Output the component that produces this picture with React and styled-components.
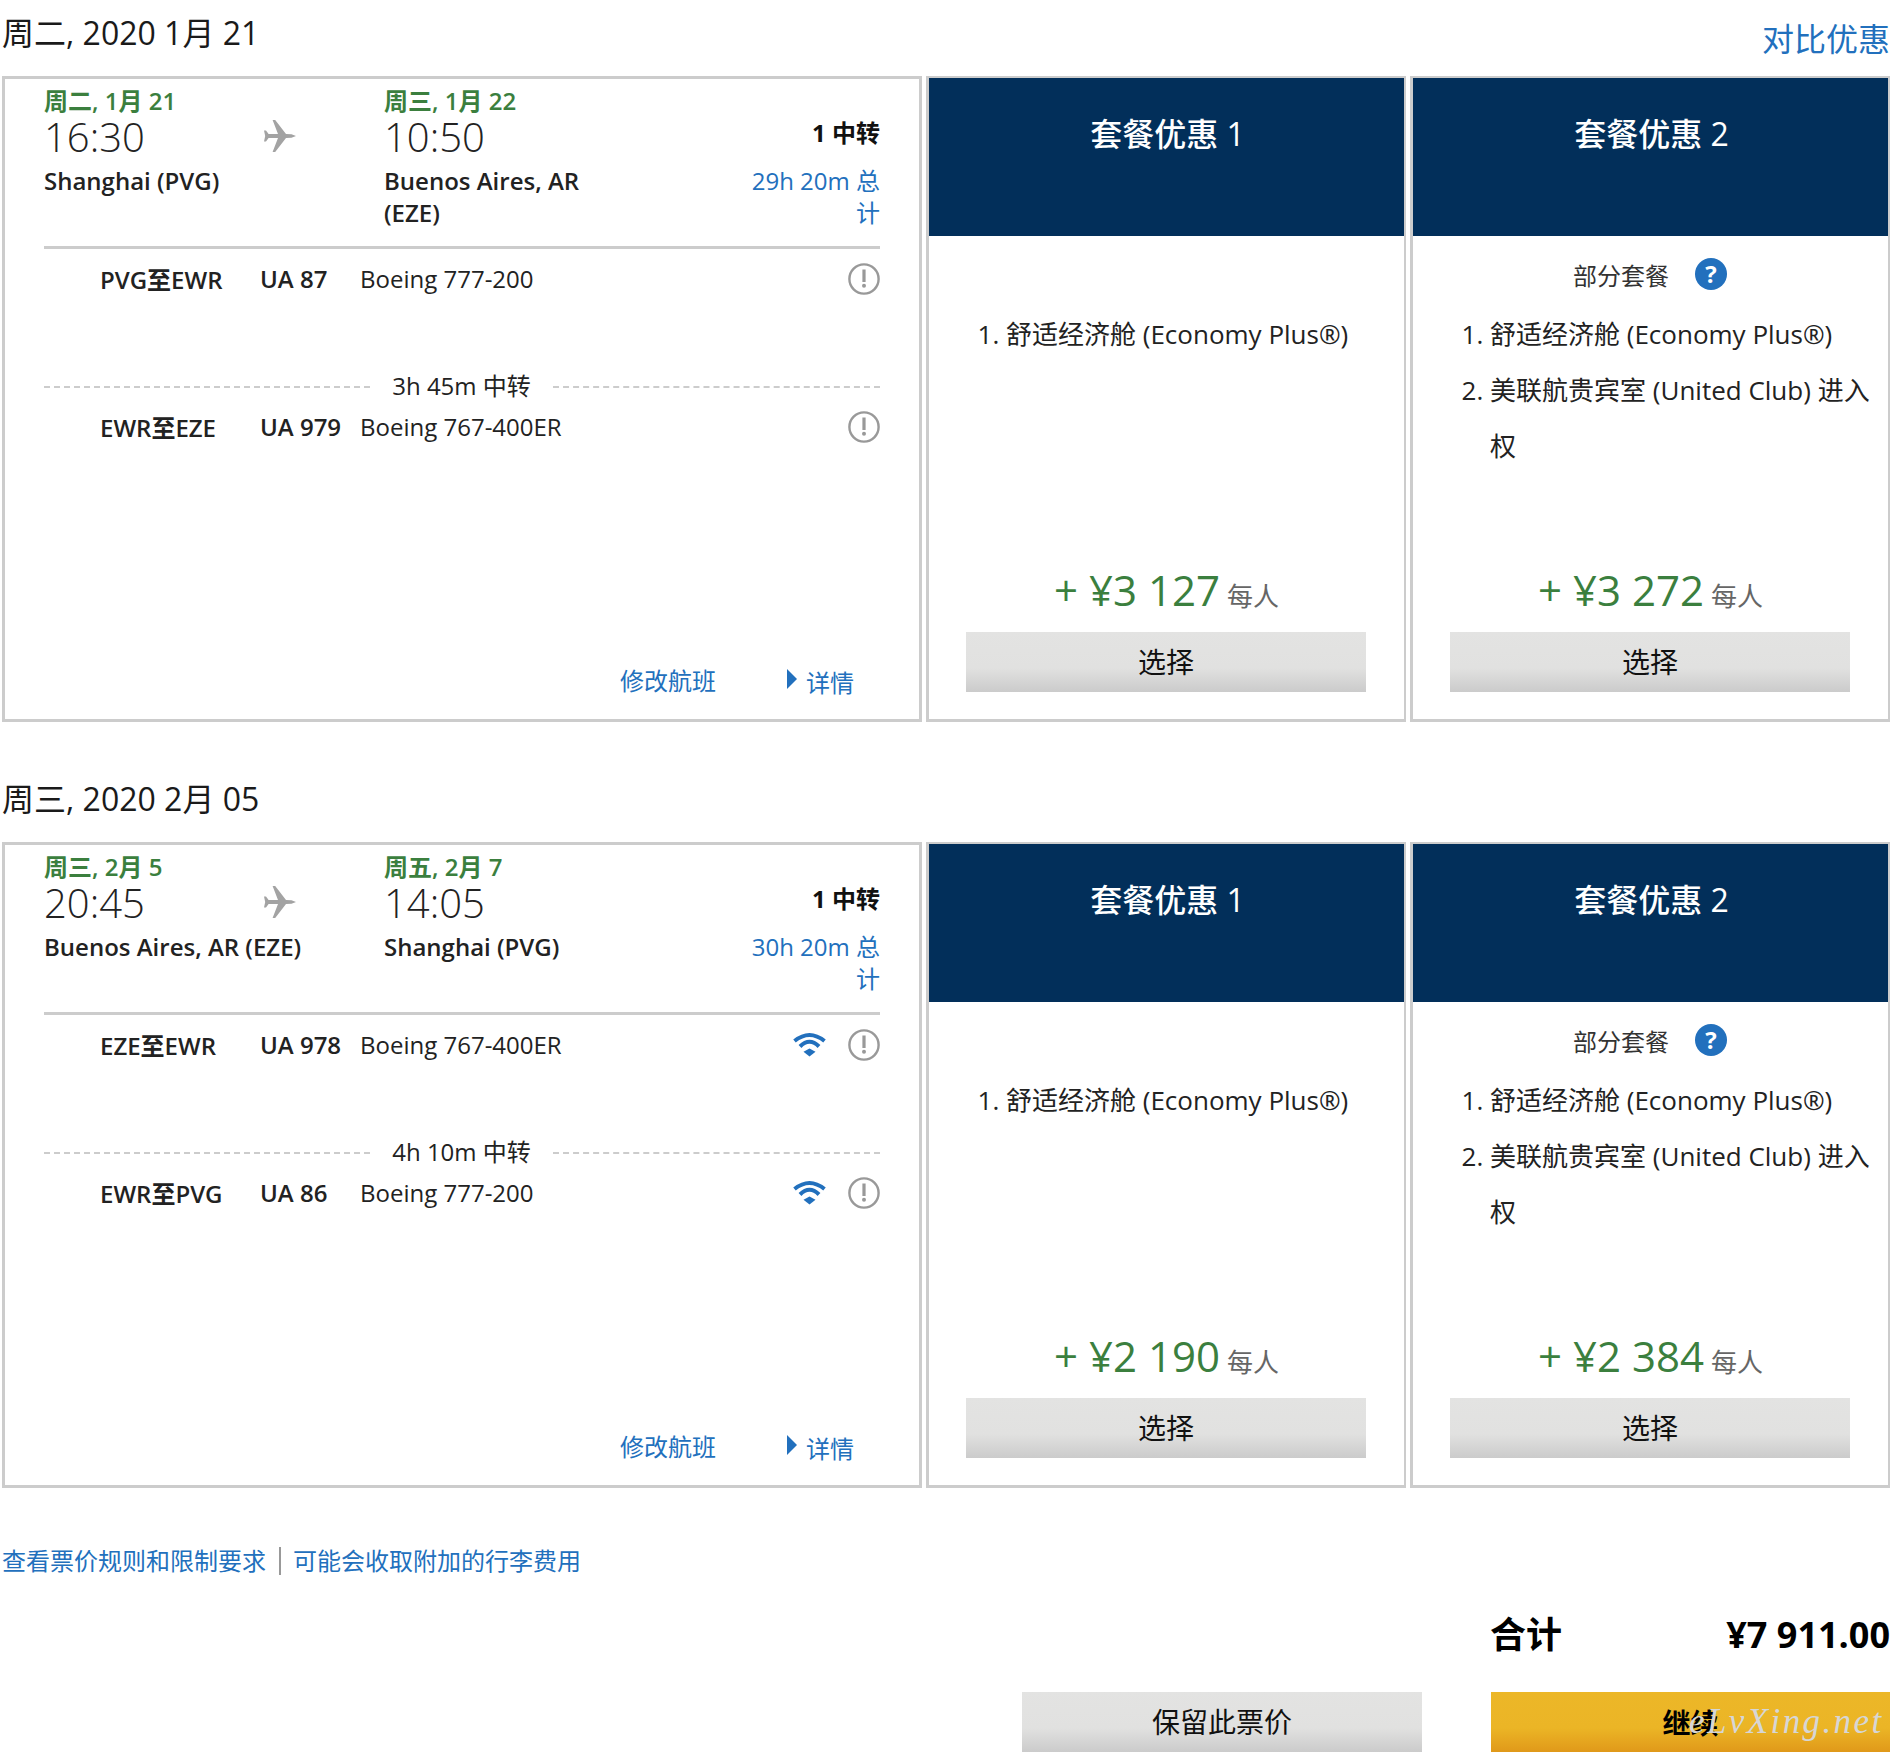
import React from 'react';
import styled, { createGlobalStyle } from 'styled-components';

const GlobalStyle = createGlobalStyle`
  html, body {
    margin: 0;
    padding: 0;
    background: #fff;
  }
  body {
    font-family: "Open Sans", "Noto Sans CJK SC", sans-serif;
    color: #1a1a1a;
  }
  * {
    box-sizing: border-box;
  }
`;

const BLUE = '#2270bd';
const GREEN = '#3b7f3e';

const Page = styled.div`
  width: 1894px;
  height: 1758px;
  padding: 0 4px 0 2px;
  overflow: hidden;
`;
const Section = styled.section`
  margin-bottom: 44px;
`;
const SectionHead = styled.div`
  height: 76px;
  display: flex;
  justify-content: space-between;
`;
const DayTitle = styled.h2`
  margin: 14px 0 0;
  font-size: 32px;
  line-height: 38px;
  font-weight: 400;
`;
const Compare = styled.a`
  margin-top: 18px;
  font-size: 32px;
  line-height: 42px;
  color: ${BLUE};
`;
const PanelRow = styled.div`
  display: grid;
  grid-template-columns: 920px 480px 480px;
  column-gap: 4px;
  height: 646px;
`;
const FlightPanel = styled.div`
  border: 3px solid #ccc;
  padding: 0 39px;
  display: flex;
  flex-direction: column;
`;
const Summary = styled.div`
  height: 170px;
  padding-top: 7px;
  border-bottom: 3px solid #ccc;
  display: grid;
  grid-template-columns: 340px 240px 1fr;
`;
const DateText = styled.div`
  font-size: 24px;
  line-height: 30px;
  font-weight: 600;
  margin-bottom: 1px;
  color: ${GREEN};
`;
const TimeLine = styled.div`
  display: flex;
  align-items: flex-start;
  height: 48px;
`;
const TimeText = styled.div`
  width: 220px;
  font-size: 40px;
  line-height: 40px;
  font-weight: 300;
  color: #222;
`;
const PlaneIcon = styled.svg`
  width: 32px;
  height: 32px;
  margin-top: 3px;
  fill: #a3a3a3;
`;
const City = styled.div`
  font-size: 24px;
  line-height: 32px;
  font-weight: 600;
  color: #222;
`;
const StopBlock = styled.div`
  text-align: right;
  padding-top: 30px;
  padding-left: 120px;
`;
const Stops = styled.div`
  font-size: 24px;
  line-height: 34px;
  font-weight: 700;
  color: #111;
  margin-bottom: 15px;
`;
const Duration = styled.div`
  font-size: 24px;
  line-height: 32px;
  color: ${BLUE};
`;
const FlightRow = styled.div`
  display: grid;
  grid-template-columns: 56px 160px 100px 1fr auto;
  align-items: center;
  height: 32px;
  margin-top: ${p => p.$top}px;
  font-size: 24px;
  color: #222;
`;
const Route = styled.div`
  grid-column: 2;
  font-weight: 600;
`;
const FlightNo = styled.div`
  font-weight: 600;
`;
const Aircraft = styled.div``;
const RowIcons = styled.div`
  display: flex;
  align-items: center;
  gap: 22px;
`;
const Layover = styled.div`
  display: grid;
  grid-template-columns: 326px 1fr 327px;
  align-items: center;
  height: 32px;
  margin-top: 78px;
  font-size: 24px;
  color: #222;
  text-align: center;
`;
const LayoverText = styled.span`
  margin-top: -5px;
`;
const DashLine = styled.div`
  border-top: 2px dashed #ccc;
`;
const PanelLinks = styled.div`
  margin-top: auto;
  margin-bottom: 20px;
  display: flex;
  align-items: center;
  padding-right: 26px;
  justify-content: flex-end;
  font-size: 24px;
  line-height: 32px;
  color: ${BLUE};
`;
const ChangeLink = styled.a`
  margin-right: 71px;
  margin-top: -4px;
`;
const DetailLink = styled.a`
  display: flex;
  align-items: flex-start;
  gap: 9px;
`;
const Caret = styled.span`
  width: 0;
  height: 0;
  margin-top: 2px;
  border-left: 10px solid ${BLUE};
  border-top: 10px solid transparent;
  border-bottom: 10px solid transparent;
`;
const OfferColumn = styled.div`
  border: solid #ccc;
  border-width: 2px 2px 3px 3px;
  display: flex;
  flex-direction: column;
`;
const OfferHead = styled.div`
  height: 158px;
  background: #022f5a;
  color: #fff;
  text-align: center;
  font-size: 32px;
  line-height: 40px;
  padding: 36px 0 0 2px;
  font-weight: 500;
`;
const OfferBody = styled.div`
  flex: 1;
  display: flex;
  flex-direction: column;
  padding: 22px 15px 27px 37px;
`;
const SubLabel = styled.div`
  height: 32px;
  display: flex;
  align-items: center;
  justify-content: center;
  gap: 26px;
  font-size: 24px;
  color: #333;
  padding-right: 23px;
`;
const HelpBadge = styled.span`
  width: 32px;
  height: 32px;
  border-radius: 50%;
  background: ${BLUE};
  color: #fff;
  font-size: 24px;
  font-weight: 700;
  line-height: 32px;
  text-align: center;
`;
const Perks = styled.ol`
  margin: 16px 0 0;
  padding: 0 0 0 40px;
  font-size: 26px;
  line-height: 56px;
  color: #222;
`;
const PriceLine = styled.div`
  margin-top: auto;
  text-align: center;
  white-space: nowrap;
  line-height: 56px;
  margin-bottom: 4px;
  padding-right: 22px;
`;
const Price = styled.span`
  font-size: 42px;
  color: ${GREEN};
`;
const PerPerson = styled.span`
  font-size: 26px;
  color: #666;
  margin-left: 7px;
`;
const GrayButton = styled.button`
  width: 400px;
  height: 60px;
  border: 0;
  padding: 0 0 2px;
  font: inherit;
  font-size: 28px;
  color: #111;
  background: linear-gradient(#e3e3e2 0%, #e1e1e0 60%, #cbcbcb 100%);
`;
const FareLinks = styled.div`
  margin-top: 57px;
  display: flex;
  align-items: center;
  font-size: 24px;
  line-height: 32px;
  color: ${BLUE};
`;
const Divider = styled.span`
  width: 2px;
  height: 28px;
  background: #999;
  margin: 0 12px 0 13px;
`;
const TotalRow = styled.div`
  width: 400px;
  margin: 33px 0 0 auto;
  display: flex;
  justify-content: space-between;
  font-size: 36px;
  line-height: 50px;
  font-weight: 700;
  color: #000;
`;
const ActionRow = styled.div`
  margin-top: 32px;
  display: flex;
  justify-content: flex-end;
  gap: 69px;
`;
const ContinueButton = styled.button`
  position: relative;
  width: 399px;
  height: 60px;
  border: 0;
  padding: 0;
  font: inherit;
  font-size: 28px;
  font-weight: 700;
  color: #000;
  background: linear-gradient(#ecb728 0%, #ebb526 60%, #e0991a 100%);
`;
const Watermark = styled.span`
  position: absolute;
  left: 198px;
  top: 10px;
  font-family: "Liberation Serif", serif;
  font-style: italic;
  font-weight: 400;
  font-size: 35px;
  letter-spacing: 2.4px;
  white-space: nowrap;
  color: #d6d6d6;
`;

const Plane = () => (
  <PlaneIcon viewBox="0 0 32 32">
    <path d="M32 16 27.5 14.2 22 13.9 11.2 0H8.6L14 13.9H4.6L2 10.4H0L1.2 16 0 21.6H2L4.6 18.1H14L8.6 32H11.2L22 18.1 27.5 17.8z" />
  </PlaneIcon>
);

const InfoIcon = () => (
  <svg width="32" height="32" viewBox="0 0 32 32">
    <circle cx="16" cy="16" r="14.6" fill="none" stroke="#999" strokeWidth="2.4" />
    <rect x="14.4" y="6.5" width="3.2" height="12.5" fill="#999" />
    <circle cx="16" cy="22.8" r="2" fill="#999" />
  </svg>
);

const WifiIcon = () => (
  <svg width="33" height="25" viewBox="0 0 33 25" fill="none" stroke={BLUE} strokeWidth="4">
    <path d="M1.5 9Q16.5-3 31.5 9" />
    <path d="M7 14.5Q16.5 5 26 14.5" />
    <path d="M16.5 24.5 10.5 19.7 16.5 16.5 22.5 19.7z" fill={BLUE} stroke="none" />
  </svg>
);

const OFFERS_BY_DAY = [
  {
    day: '周二, 2020 1月 21',
    depart: { date: '周二, 1月 21', time: '16:30', city: 'Shanghai (PVG)' },
    arrive: { date: '周三, 1月 22', time: '10:50', city: 'Buenos Aires, AR (EZE)' },
    duration: '29h 20m 总计',
    layover: '3h 45m 中转',
    wifi: false,
    legs: [
      { route: 'PVG至EWR', no: 'UA 87', plane: 'Boeing 777-200' },
      { route: 'EWR至EZE', no: 'UA 979', plane: 'Boeing 767-400ER' },
    ],
    prices: ['+ ¥3 127', '+ ¥3 272'],
  },
  {
    day: '周三, 2020 2月 05',
    depart: { date: '周三, 2月 5', time: '20:45', city: 'Buenos Aires, AR (EZE)' },
    arrive: { date: '周五, 2月 7', time: '14:05', city: 'Shanghai (PVG)' },
    duration: '30h 20m 总计',
    layover: '4h 10m 中转',
    wifi: true,
    legs: [
      { route: 'EZE至EWR', no: 'UA 978', plane: 'Boeing 767-400ER' },
      { route: 'EWR至PVG', no: 'UA 86', plane: 'Boeing 777-200' },
    ],
    prices: ['+ ¥2 190', '+ ¥2 384'],
  },
];

const Leg = ({ leg, top, wifi }) => (
  <FlightRow $top={top}>
    <Route>{leg.route}</Route>
    <FlightNo>{leg.no}</FlightNo>
    <Aircraft>{leg.plane}</Aircraft>
    <RowIcons>
      {wifi && <WifiIcon />}
      <InfoIcon />
    </RowIcons>
  </FlightRow>
);

const Offer = ({ index, price }) => (
  <OfferColumn>
    <OfferHead>套餐优惠 {index}</OfferHead>
    <OfferBody>
      <SubLabel>
        {index === 2 && (
          <>
            部分套餐
            <HelpBadge>?</HelpBadge>
          </>
        )}
      </SubLabel>
      <Perks>
        <li>舒适经济舱 (Economy Plus®)</li>
        {index === 2 && <li>美联航贵宾室 (United Club) 进入权</li>}
      </Perks>
      <PriceLine>
        <Price>{price}</Price>
        <PerPerson>每人</PerPerson>
      </PriceLine>
      <GrayButton>选择</GrayButton>
    </OfferBody>
  </OfferColumn>
);

const DaySection = ({ data, showCompare }) => (
  <Section>
    <SectionHead>
      <DayTitle>{data.day}</DayTitle>
      {showCompare && <Compare>对比优惠</Compare>}
    </SectionHead>
    <PanelRow>
      <FlightPanel>
        <Summary>
          <div>
            <DateText>{data.depart.date}</DateText>
            <TimeLine>
              <TimeText>{data.depart.time}</TimeText>
              <Plane />
            </TimeLine>
            <City>{data.depart.city}</City>
          </div>
          <div>
            <DateText>{data.arrive.date}</DateText>
            <TimeLine>
              <TimeText>{data.arrive.time}</TimeText>
            </TimeLine>
            <City>{data.arrive.city}</City>
          </div>
          <StopBlock>
            <Stops>1 中转</Stops>
            <Duration>{data.duration}</Duration>
          </StopBlock>
        </Summary>
        <Leg leg={data.legs[0]} top={12} wifi={data.wifi} />
        <Layover>
          <DashLine />
          <LayoverText>{data.layover}</LayoverText>
          <DashLine />
        </Layover>
        <Leg leg={data.legs[1]} top={6} wifi={data.wifi} />
        <PanelLinks>
          <ChangeLink>修改航班</ChangeLink>
          <DetailLink>
            <Caret />
            详情
          </DetailLink>
        </PanelLinks>
      </FlightPanel>
      <Offer index={1} price={data.prices[0]} />
      <Offer index={2} price={data.prices[1]} />
    </PanelRow>
  </Section>
);

export default function App() {
  return (
    <>
      <GlobalStyle />
      <Page>
        {OFFERS_BY_DAY.map((d, i) => (
          <DaySection key={d.day} data={d} showCompare={i === 0} />
        ))}
        <FareLinks>
          <a>查看票价规则和限制要求</a>
          <Divider />
          <a>可能会收取附加的行李费用</a>
        </FareLinks>
        <TotalRow>
          <span>合计</span>
          <span>¥7 911.00</span>
        </TotalRow>
        <ActionRow>
          <GrayButton>保留此票价</GrayButton>
          <ContinueButton>
            继续
            <Watermark>eLvXing.net</Watermark>
          </ContinueButton>
        </ActionRow>
      </Page>
    </>
  );
}
